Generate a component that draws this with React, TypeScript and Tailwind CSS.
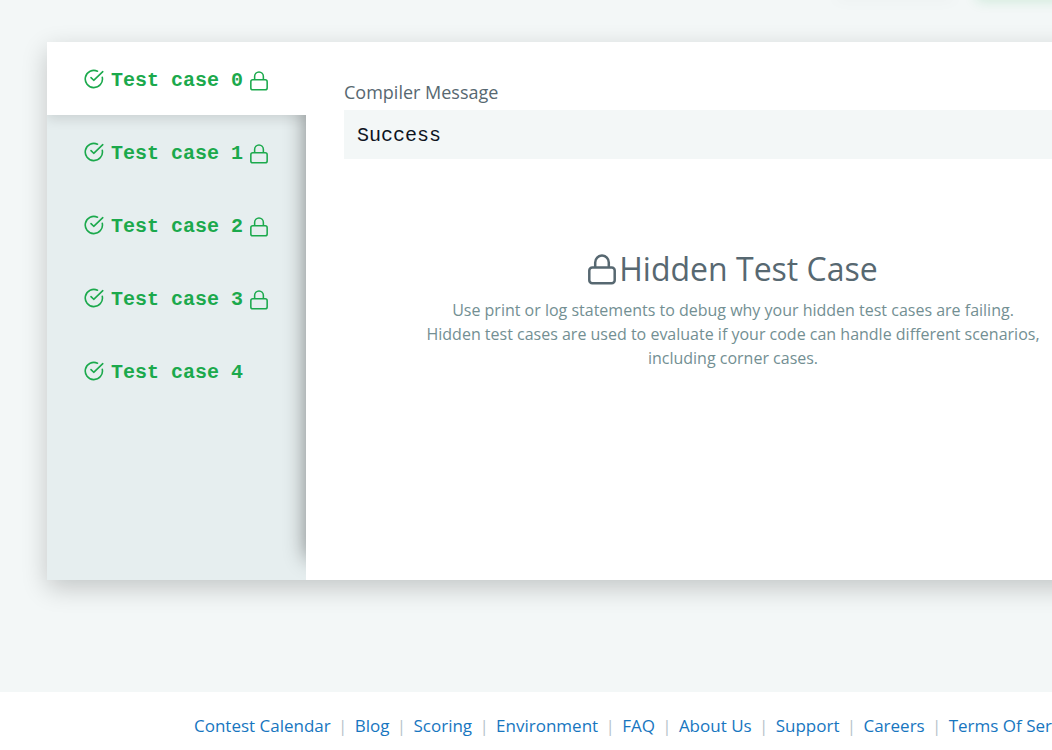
import { useState } from "react";

const testCases = [
  { name: "Test case 0", hidden: true },
  { name: "Test case 1", hidden: true },
  { name: "Test case 2", hidden: true },
  { name: "Test case 3", hidden: true },
  { name: "Test case 4", hidden: false },
];

const footerLinks = [
  "Contest Calendar",
  "Blog",
  "Scoring",
  "Environment",
  "FAQ",
  "About Us",
  "Support",
  "Careers",
  "Terms Of Service",
];

function CheckIcon() {
  return (
    <svg
      className="size-5 shrink-0"
      viewBox="0 0 20 20"
      fill="none"
      stroke="currentColor"
      strokeWidth="1.6"
      strokeLinecap="round"
      strokeLinejoin="round"
      aria-hidden="true"
    >
      <path d="M18.3 8.4A8.6 8.6 0 1 1 13.5 2.2" />
      <path d="M7 8.6 9.7 11.3 18.8 2.7" />
    </svg>
  );
}

function LockIcon({ className, stroke }: { className: string; stroke: number }) {
  return (
    <svg
      className={className}
      viewBox="0 0 28 31"
      fill="none"
      stroke="currentColor"
      strokeWidth={stroke}
      strokeLinejoin="round"
      aria-hidden="true"
    >
      <rect x="1.3" y="13.6" width="25.4" height="15.6" rx="3" />
      <path d="M7.2 13.6V8.4a6.8 6.8 0 0 1 13.6 0v5.2" />
    </svg>
  );
}

export default function App() {
  const [active, setActive] = useState(0);

  return (
    <div className="overflow-x-hidden bg-white font-['Open_Sans',sans-serif] text-[#576871]">
      <div className="min-w-[1207px] bg-[#f3f7f7]">
        <div className="flex h-0 justify-end gap-8 pr-12" aria-hidden="true">
          <div className="h-0 w-28 shadow-[0_-4px_16px_4px_rgba(0,0,0,0.04)]" />
          <div className="h-0 w-44 shadow-[0_-6px_14px_6px_rgba(27,169,76,0.2)]" />
        </div>

        <main className="px-[47px] pt-[42px] pb-28">
          <section className="flex min-h-[538px] overflow-hidden bg-white shadow-[0_8px_24px_rgba(0,0,0,0.2)]">
            <nav className="flex w-[259px] shrink-0 flex-col bg-[#e6eeef]">
              {testCases.map((test, index) => (
                <button
                  key={test.name}
                  type="button"
                  onClick={() => setActive(index)}
                  className={
                    "flex h-[73px] w-full items-center pl-[37px] text-left font-['Liberation_Mono',monospace] text-[20px] leading-6 font-bold text-[#1ba94c] " +
                    (index === active
                      ? "relative bg-white shadow-[0_4px_12px_rgba(0,0,0,0.12)]"
                      : "")
                  }
                >
                  <CheckIcon />
                  <span className="pt-1 pl-[7px]">{test.name}</span>
                  {test.hidden && <LockIcon className="mt-1 ml-[7px] h-5 w-[18px]" stroke={2.4} />}
                </button>
              ))}
            </nav>

            <div className="min-w-0 flex-1 bg-white shadow-[0_-22px_20px_rgba(0,0,0,0.45)]">
              <div className="relative h-full bg-white px-[38px] pt-[38px]">
                <h2 className="text-[18px] leading-6">Compiler Message</h2>
                <pre className="mt-1.5 bg-[#f3f7f7] px-[13px] pt-[14px] pb-[11px] font-['Liberation_Mono',monospace] text-[20px] leading-6 text-[#0e141e]">
                  Success
                </pre>

                <div className="mt-[86px] text-center">
                  <h1 className="flex items-center justify-center text-[32px] leading-12">
                    <LockIcon className="h-[31px] w-7" stroke={2.5} />
                    <span className="pl-[3px]">Hidden Test Case</span>
                  </h1>
                  <p className="mx-auto mt-[5px] max-w-[640px] text-[16px] leading-6 text-[#738f93]">
                    Use print or log statements to debug why your hidden test cases are failing.
                    <br />
                    Hidden test cases are used to evaluate if your code can handle different
                    scenarios, including corner cases.
                  </p>
                </div>
              </div>
            </div>
          </section>
        </main>

        <footer className="bg-white pt-[22px] pb-3 pl-[194px]">
          <ul className="flex text-[17px] leading-6 whitespace-nowrap text-[#1776bf]">
            {footerLinks.map((link, index) => (
              <li key={link} className="flex">
                {index > 0 && <span className="w-6 text-center text-[#b7c3cb]">|</span>}
                <a href="#" className="hover:underline">
                  {link}
                </a>
              </li>
            ))}
          </ul>
        </footer>
      </div>
    </div>
  );
}
